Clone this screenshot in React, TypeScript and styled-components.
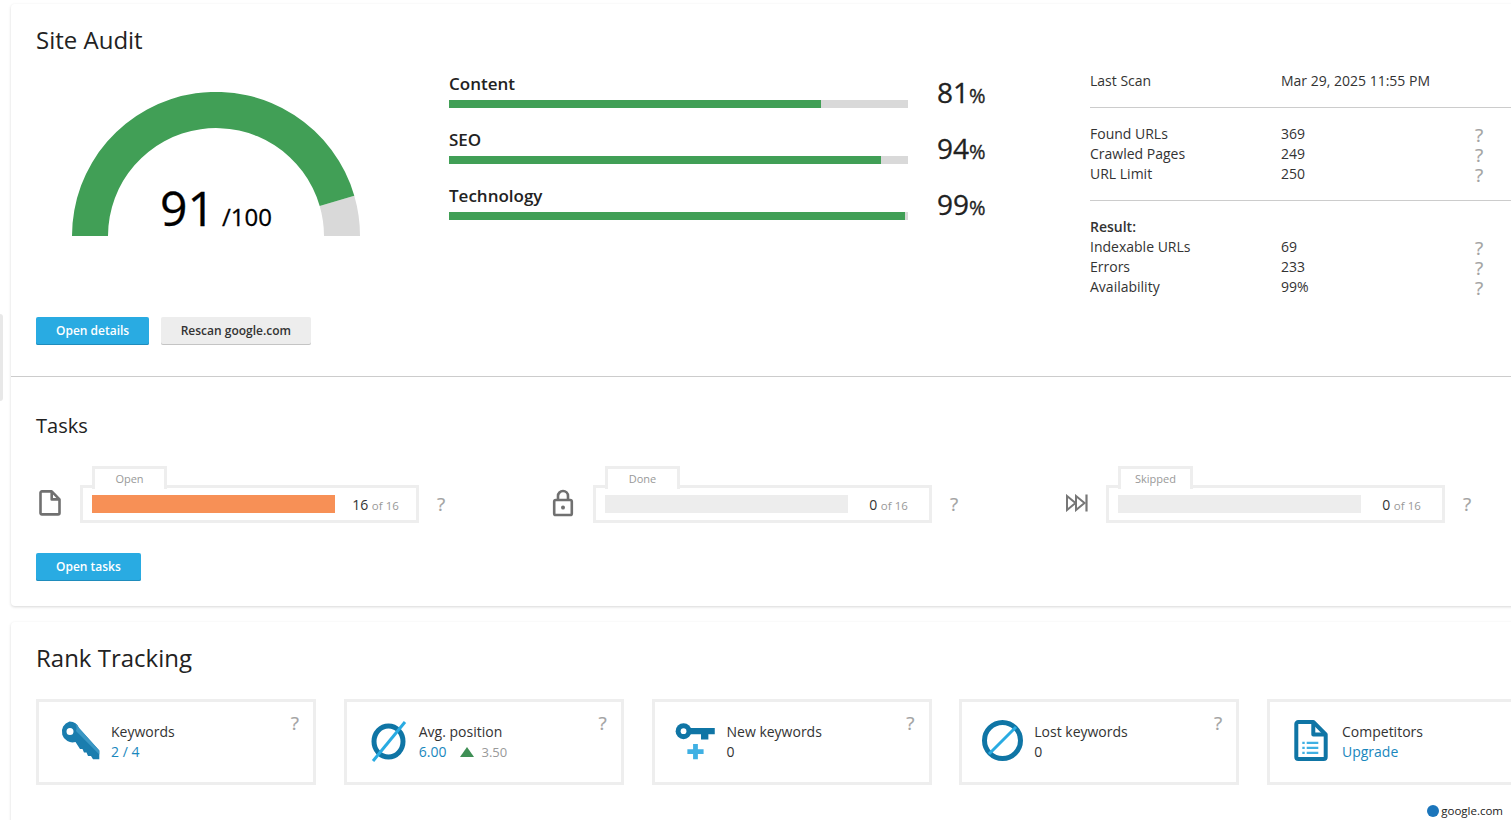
import React from "react";
import styled, { createGlobalStyle } from "styled-components";

const Global = createGlobalStyle`
  html, body { margin: 0; padding: 0; height: 100%; background: #fff; overflow: hidden; }
  body { font-family: "Open Sans", "Liberation Sans", sans-serif; color: #222; }
  * { box-sizing: border-box; }
`;

const Page = styled.div`
  width: 1511px; height: 820px; overflow: hidden; position: relative;
  padding: 4px 0 0 11px;
`;
const SideTab = styled.div`
  position: absolute; left: 0; top: 314px; width: 3px; height: 87px;
  background: #e8e8e8; border-radius: 0 3px 3px 0;
`;
const Card = styled.section`
  width: 1530px; background: #fff; border-radius: 4px;
  box-shadow: 0 1px 3px rgba(0,0,0,.16);
  margin-bottom: 16px;
`;
const AuditSection = styled.div`
  height: 373px; padding: 20px 0 0 25px; border-bottom: 1px solid #ccc;
`;
const TasksSection = styled.div`
  padding: 33px 0 0 25px; height: 229px;
`;
const RankSection = styled.div`
  padding: 20px 0 0 25px; height: 300px;
`;
const Title = styled.h2<{ $size: number }>`
  margin: 0; font-weight: 400; color: #222; font-size: ${p => p.$size}px; line-height: 32px;
`;
const AuditBody = styled.div`
  display: grid; grid-template-columns: 413px 641px 1fr; margin-top: 16px; height: 245px;
`;
const GaugeColumn = styled.div`
  position: relative; padding: 20px 0 0 36px;
`;
const GaugeScore = styled.div`
  position: absolute; left: 124px; top: 107px; display: flex; align-items: baseline; color: #000;
  -webkit-text-stroke: 0.3px #000;
`;
const ScoreBig = styled.span`font-size: 48px; line-height: 58px;`;
const ScoreSmall = styled.span`font-size: 24px; margin-left: 7px;`;
const Bars = styled.div`
  display: flex; flex-direction: column; gap: 20px;
`;
const BarRow = styled.div`
  display: grid; grid-template-columns: 459px 1fr; column-gap: 29px; align-items: end; height: 36px;
`;
const BarLeft = styled.div``;
const BarLabel = styled.div`font-size: 17px; font-weight: 600; line-height: 24px; color: #222; height: 28px;`;
const BarTrack = styled.div`height: 8px; background: #d9d9d9;`;
const BarFill = styled.div`height: 100%; background: #419f56;`;
const Pct = styled.div`
  font-size: 28px; line-height: 40px; color: #222; white-space: nowrap; margin-bottom: -8px;
  -webkit-text-stroke: 0.3px #222;
`;
const PctUnit = styled.span`font-size: 20px;`;
const Info = styled.div`font-size: 14px; line-height: 20px; color: #333;`;
const InfoBlock = styled.div<{ $last?: boolean }>`
  padding: 16px 0;
  border-bottom: ${p => (p.$last ? "none" : "1px solid #ccc")};
`;
const InfoTop = styled(InfoBlock)`padding: 0 0 16px; margin-top: -1px;`;
const InfoRow = styled.div`
  display: grid; grid-template-columns: 191px 194px 30px; grid-template-rows: 20px; align-items: center; height: 20px;
`;
const Bold = styled.div`font-weight: 600; height: 20px;`;
const Help = styled.span`
  font-size: 19px; color: #a3a3a3; line-height: 20px; font-weight: 400;
  -webkit-text-stroke: 0.2px #a3a3a3;
`;
const InfoHelp = styled(Help)`padding-top: 2px;`;
const Buttons = styled.div`display: flex; gap: 12px;`;
const Btn = styled.button<{ $grey?: boolean }>`
  height: 28px; padding: 0 ${p => (p.$grey ? "19.5px" : "20px")} 2px; border: 0; border-radius: 2px;
  font-family: inherit; font-size: 12px; font-weight: 600; white-space: nowrap;
  background: ${p => (p.$grey ? "#ededed" : "#29abe2")};
  color: ${p => (p.$grey ? "#333" : "#fff")};
  box-shadow: inset 0 -1px 0 ${p => (p.$grey ? "#c4c4c4" : "#1f8cbc")};
`;
const TaskGrid = styled.div`
  display: grid; grid-template-columns: repeat(3, 513px); margin-top: 24px;
`;
const TaskItem = styled.div`
  display: grid; grid-template-columns: 44px 339px 36px; align-items: center;
  height: 57px; padding-top: 19px;
`;
const TaskIcon = styled.div`display: flex; padding-left: 3px; align-items: center; margin-bottom: 2px;`;
const TaskBox = styled.div`
  position: relative; height: 38px; border: 3px solid #eee;
  display: grid; grid-template-columns: 243px 1fr; align-items: center; padding-left: 9px;
`;
const TaskTab = styled.div`
  position: absolute; left: 9px; top: -22px; width: 75px; height: 23px;
  border: 3px solid #eee; border-bottom: 0; background: #fff;
  font-size: 11px; color: #999; text-align: center; line-height: 19px;
`;
const TaskBar = styled.div<{ $on: boolean }>`height: 18px; background: ${p => (p.$on ? "#f79056" : "#ededed")};`;
const Count = styled.div`font-size: 14px; color: #333; white-space: nowrap; text-align: center;`;
const CountOf = styled.span`font-size: 11.5px; color: #999;`;
const TaskHelp = styled.div`padding-left: 18px; height: 20px;`;
const TaskButtonRow = styled.div`margin-top: 30px;`;
const RankGrid = styled.div`
  display: grid; grid-template-columns: repeat(5, 280px); column-gap: 27.75px; margin-top: 25px;
`;
const RankCard = styled.div`
  position: relative; height: 86px; border: 3px solid #eee;
  display: flex; align-items: center; padding: 0 0 0 19px; gap: 11px;
`;
const RankIcon = styled.div`width: 42px; height: 44px; flex: none; display: flex;`;
const RankName = styled.div`font-size: 14px; line-height: 20px; color: #333;`;
const RankValue = styled.div<{ $link?: boolean }>`
  font-size: 14px; line-height: 20px; color: ${p => (p.$link ? "#1a87bd" : "#333")};
  display: flex; align-items: center;
`;
const Trend = styled.span`
  margin-left: 14px; font-size: 13px; color: #999; display: inline-flex; align-items: center; gap: 7px;
`;
const CornerHelp = styled.div`position: absolute; right: 14px; top: 11px;`;
const Badge = styled.div`
  position: absolute; right: 8px; bottom: 1px; display: flex; align-items: center; gap: 2px;
  font-size: 11.5px; color: #222; background: #fff; line-height: 16px; padding-left: 2px;
`;
const Dot = styled.span`width: 12px; height: 12px; border-radius: 50%; background: #1b75bb;`;

const FileIcon = () => (
  <svg width="22" height="26" viewBox="0 0 22 26" fill="none" stroke="#707070" strokeWidth="2.6" strokeLinejoin="round">
    <path d="M1.500 2.800a1.400 1.400 0 0 1 1.400-1.400h9.800l7.800 8V23a1.400 1.400 0 0 1-1.400 1.400H2.900A1.400 1.400 0 0 1 1.500 23z" />
    <path d="M12.700 1.400v8h7.800" />
  </svg>
);
const LockIcon = () => (
  <svg width="22" height="28" viewBox="0 0 22 28" fill="none" stroke="#707070" strokeWidth="2.6">
    <path d="M6 11V7a5 5 0 0 1 10 0v4" />
    <rect x="2.200" y="11" width="17.600" height="15" rx="1.600" />
    <circle cx="11" cy="18.500" r="2" fill="#707070" stroke="none" />
  </svg>
);
const SkipIcon = () => (
  <svg width="23" height="18" viewBox="-1 0 23 18" fill="none" stroke="#777" strokeWidth="2">
    <path d="M1 2 9.500 9 1 16z" />
    <path d="M10 2 18.500 9 10 16z" />
    <path d="M20.500 0.500v17" strokeWidth="2.200" />
  </svg>
);
const KeyIcon = () => (
  <svg width="42" height="44" viewBox="-2 0 42 44">
    <path
      fill="#1a7dae"
      fillRule="evenodd"
      d="M9.500 1.500a10 10 0 0 1 9.500 6.500l20.300 22.500V39.300H33L31 36h-3l-1.500-3.500H24L22.500 29H20l-4.500-7A10 10 0 1 1 9.500 1.500zm.5 6.500a3.500 3.500 0 1 0 0 7 3.500 3.500 0 0 0 0-7z"
    />
    <path fill="#3a97c4" d="M15 3.500a10 10 0 0 1 4 4.500l20.300 22.500v4L16 11a8 8 0 0 0-1-7.500z" />
  </svg>
);
const AvgIcon = () => (
  <svg width="42" height="44" viewBox="0 0 42 44" fill="none">
    <ellipse cx="22.500" cy="21.500" rx="14.500" ry="15.500" stroke="#0f75a5" strokeWidth="5" />
    <path d="M39 2 7 41" stroke="#29abe2" strokeWidth="3" />
  </svg>
);
const NewKeyIcon = () => (
  <svg width="44" height="44" viewBox="0 0 44 44">
    <circle cx="10" cy="10.700" r="8.300" fill="#0f75a5" />
    <path fill="#0f75a5" d="M15 7.300h27.700V14H36v5.300h-7.700V14H15z" />
    <circle cx="10" cy="10.700" r="3" fill="#fff" />
    <path fill="#3fb0e3" d="M20 24h5v5.500h6v5h-6V40h-5v-5.500h-6v-5h6z" />
  </svg>
);
const LostIcon = () => (
  <svg width="42" height="44" viewBox="0 0 42 44" fill="none">
    <circle cx="21.500" cy="20.500" r="18" stroke="#0f75a5" strokeWidth="5" />
    <path d="M35 7 8 34" stroke="#29abe2" strokeWidth="3" />
  </svg>
);
const CompetitorIcon = () => (
  <svg width="42" height="44" viewBox="0 0 42 44" fill="none">
    <path
      d="M24.300 2H9.300a2 2 0 0 0-2 2v33a2 2 0 0 0 2 2h25.400a2 2 0 0 0 2-2V14.500z"
      stroke="#0f75a5"
      strokeWidth="4"
      strokeLinejoin="round"
    />
    <path d="M24.300 2v12.500h12.400" stroke="#0f75a5" strokeWidth="4" strokeLinejoin="round" />
    <path
      fill="#3fb0e3"
      d="M13.300 21.700h2.400v2.200h-2.400zm4.400 0h11.600v2.200H17.700zM13.300 26.700h2.400v2.200h-2.400zm4.400 0h11.600v2.200H17.700zM13.300 31.700h2.400v2.200h-2.400zm4.400 0h11.600v2.200H17.700z"
    />
  </svg>
);

const bars = [
  { label: "Content", value: 81, fill: 81 },
  { label: "SEO", value: 94, fill: 94.2 },
  { label: "Technology", value: 99, fill: 99.3 },
];
const tasks = [
  { label: "Open", count: 16, icon: <FileIcon /> },
  { label: "Done", count: 0, icon: <LockIcon /> },
  { label: "Skipped", count: 0, icon: <SkipIcon /> },
];

const Row = ({ label, value, help = true }: { label: string; value: string; help?: boolean }) => (
  <InfoRow>
    <span>{label}</span>
    <span>{value}</span>
    {help ? <InfoHelp>?</InfoHelp> : <span />}
  </InfoRow>
);

export default function App() {
  return (
    <Page>
      <Global />
      <SideTab />
      <Card>
        <AuditSection>
          <Title $size={24}>Site Audit</Title>
          <AuditBody>
            <GaugeColumn>
              <svg width="288" height="144" viewBox="0 0 288 144">
                <path fill="#d9d9d9" d="M282.300 103.800A144 144 0 0 1 288 144h-36a108 108 0 0 0-4.300-30.100z" />
                <path fill="#419f56" d="M0 144A144 144 0 0 1 282.300 103.800l-34.600 10.100A108 108 0 0 0 36 144z" />
              </svg>
              <GaugeScore>
                <ScoreBig>91</ScoreBig>
                <ScoreSmall>/100</ScoreSmall>
              </GaugeScore>
            </GaugeColumn>
            <Bars>
              {bars.map(b => (
                <BarRow key={b.label}>
                  <BarLeft>
                    <BarLabel>{b.label}</BarLabel>
                    <BarTrack>
                      <BarFill style={{ width: `${b.fill}%` }} />
                    </BarTrack>
                  </BarLeft>
                  <Pct>
                    {b.value}
                    <PctUnit>%</PctUnit>
                  </Pct>
                </BarRow>
              ))}
            </Bars>
            <Info>
              <InfoTop>
                <Row label="Last Scan" value="Mar 29, 2025 11:55 PM" help={false} />
              </InfoTop>
              <InfoBlock>
                <Row label="Found URLs" value="369" />
                <Row label="Crawled Pages" value="249" />
                <Row label="URL Limit" value="250" />
              </InfoBlock>
              <InfoBlock $last>
                <Bold>Result:</Bold>
                <Row label="Indexable URLs" value="69" />
                <Row label="Errors" value="233" />
                <Row label="Availability" value="99%" />
              </InfoBlock>
            </Info>
          </AuditBody>
          <Buttons>
            <Btn>Open details</Btn>
            <Btn $grey>Rescan google.com</Btn>
          </Buttons>
        </AuditSection>
        <TasksSection>
          <Title $size={20}>Tasks</Title>
          <TaskGrid>
            {tasks.map(t => (
              <TaskItem key={t.label}>
                <TaskIcon>{t.icon}</TaskIcon>
                <TaskBox>
                  <TaskTab>{t.label}</TaskTab>
                  <TaskBar $on={t.count > 0} />
                  <Count>
                    {t.count} <CountOf>of 16</CountOf>
                  </Count>
                </TaskBox>
                <TaskHelp>
                  <Help>?</Help>
                </TaskHelp>
              </TaskItem>
            ))}
          </TaskGrid>
          <TaskButtonRow>
            <Btn>Open tasks</Btn>
          </TaskButtonRow>
        </TasksSection>
      </Card>
      <Card>
        <RankSection>
          <Title $size={24}>Rank Tracking</Title>
          <RankGrid>
            <RankCard>
              <RankIcon><KeyIcon /></RankIcon>
              <div>
                <RankName>Keywords</RankName>
                <RankValue $link>2 / 4</RankValue>
              </div>
              <CornerHelp><Help>?</Help></CornerHelp>
            </RankCard>
            <RankCard>
              <RankIcon><AvgIcon /></RankIcon>
              <div>
                <RankName>Avg. position</RankName>
                <RankValue $link>
                  6.00
                  <Trend>
                    <svg width="14" height="10" viewBox="0 0 14 10"><path fill="#3f8f55" d="M7 0l7 10H0z" /></svg>
                    3.50
                  </Trend>
                </RankValue>
              </div>
              <CornerHelp><Help>?</Help></CornerHelp>
            </RankCard>
            <RankCard>
              <RankIcon><NewKeyIcon /></RankIcon>
              <div>
                <RankName>New keywords</RankName>
                <RankValue>0</RankValue>
              </div>
              <CornerHelp><Help>?</Help></CornerHelp>
            </RankCard>
            <RankCard>
              <RankIcon><LostIcon /></RankIcon>
              <div>
                <RankName>Lost keywords</RankName>
                <RankValue>0</RankValue>
              </div>
              <CornerHelp><Help>?</Help></CornerHelp>
            </RankCard>
            <RankCard>
              <RankIcon><CompetitorIcon /></RankIcon>
              <div>
                <RankName>Competitors</RankName>
                <RankValue $link>Upgrade</RankValue>
              </div>
            </RankCard>
          </RankGrid>
        </RankSection>
      </Card>
      <Badge>
        <Dot />
        google.com
      </Badge>
    </Page>
  );
}
